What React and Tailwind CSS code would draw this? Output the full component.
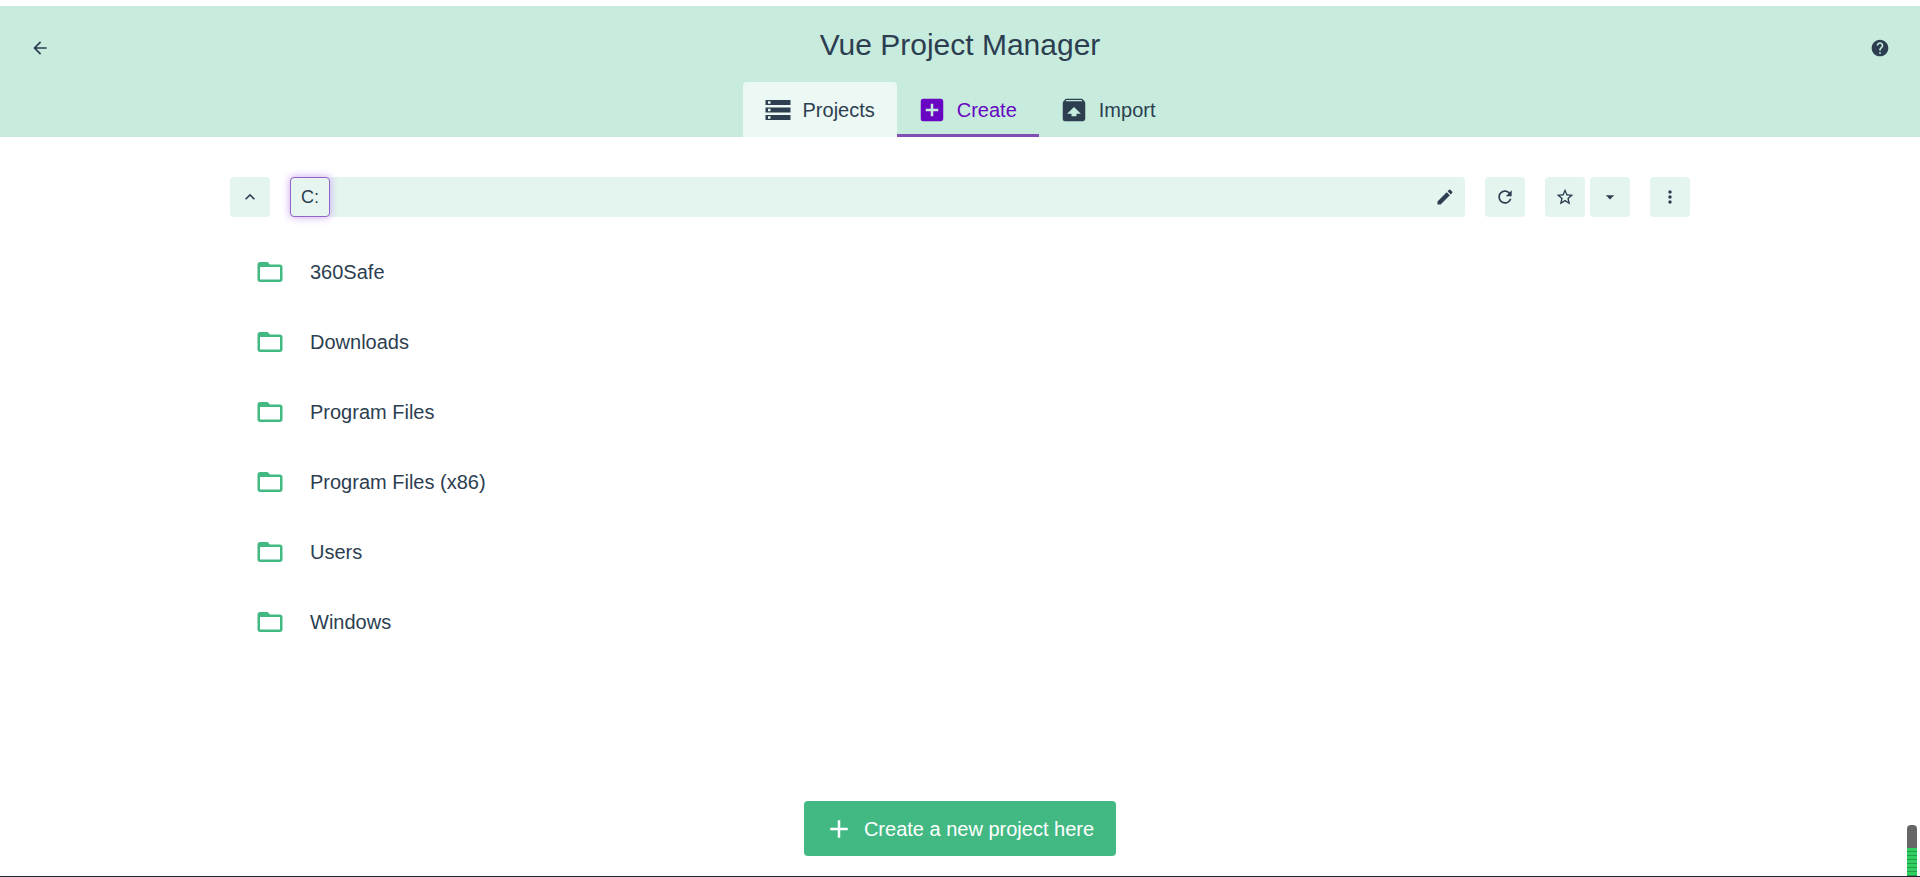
import {
  MdAdd,
  MdAddBox,
  MdArrowBack,
  MdArrowDropDown,
  MdEdit,
  MdHelp,
  MdKeyboardArrowUp,
  MdMoreVert,
  MdRefresh,
  MdStarBorder,
  MdStorage,
  MdUnarchive,
} from "react-icons/md";

const tabs = [
  { label: "Projects", Icon: MdStorage, style: "rounded-t-sm bg-[#ebf8f3]" },
  { label: "Create", Icon: MdAddBox, style: "border-b-3 border-[#7f4fb3] pt-[3px] text-[#6806c1]" },
  { label: "Import", Icon: MdUnarchive, style: "" },
];

const folders = ["360Safe", "Downloads", "Program Files", "Program Files (x86)", "Users", "Windows"];

function FolderIcon() {
  return (
    <svg viewBox="0 0 24 24" width="30" height="30" fill="currentColor" aria-hidden="true" className="text-[#42b983]">
      <path d="M20 6h-8l-2-2H4c-1.1 0-1.99.9-1.99 2L2 18c0 1.1.9 2 2 2h16c1.1 0 2-.9 2-2V8c0-1.1-.9-2-2-2zm0 12H4V8h16v10z" />
    </svg>
  );
}

function IconButton({ label, Icon }) {
  return (
    <button
      type="button"
      aria-label={label}
      className="flex size-10 shrink-0 items-center justify-center rounded-sm bg-[#e3f5ee]"
    >
      <Icon size={20} />
    </button>
  );
}

function Header() {
  return (
    <header className="mt-1.5 grid grid-cols-[1fr_auto_1fr] items-start bg-[#c7ecde]">
      <button type="button" aria-label="Back" className="ml-5 mt-5.5 flex size-10 items-center justify-center">
        <MdArrowBack size={20} />
      </button>
      <div className="flex flex-col items-center pt-5">
        <h1 className="text-[30px] leading-[38px]">Vue Project Manager</h1>
        <nav aria-label="Sections" className="mt-[18px] flex">
          {tabs.map(({ label, Icon, style }) => (
            <a key={label} href={"#" + label.toLowerCase()} className={`flex h-[55px] items-center gap-2.5 pl-5 pr-[22px] text-xl ${style}`}>
              <Icon size={30} />
              <span>{label}</span>
            </a>
          ))}
        </nav>
      </div>
      <button type="button" aria-label="Help" className="mr-5 mt-5.5 flex size-10 items-center justify-center justify-self-end">
        <MdHelp size={20} />
      </button>
    </header>
  );
}

function Toolbar() {
  return (
    <div className="flex gap-5">
      <IconButton label="Parent folder" Icon={MdKeyboardArrowUp} />
      <div className="flex flex-1 items-center justify-between rounded-sm bg-[#e3f5ee]">
        <button
          type="button"
          className="flex size-10 items-center justify-center rounded-sm border border-[#9464cc] bg-[#e6f5f0] text-lg shadow-[0_0_8px_#c9a3f2]"
        >
          C:
        </button>
        <IconButton label="Edit path" Icon={MdEdit} />
      </div>
      <IconButton label="Refresh" Icon={MdRefresh} />
      <div className="flex gap-[5px]">
        <IconButton label="Add to favorites" Icon={MdStarBorder} />
        <IconButton label="Favorites" Icon={MdArrowDropDown} />
      </div>
      <IconButton label="More actions" Icon={MdMoreVert} />
    </div>
  );
}

function LevelMeter() {
  return (
    <div className="absolute bottom-0 right-[3px] flex h-[51px] w-2.5 flex-col justify-end overflow-hidden rounded-t-sm bg-[#666666]">
      <div className="h-7 bg-[repeating-linear-gradient(#2fd05f_0_3px,#259a48_3px_4px)]" />
    </div>
  );
}

export default function App() {
  return (
    <div className="relative flex min-h-screen flex-col border-b border-[#1c2436] bg-white font-['Liberation_Sans',Arial,sans-serif] text-[#2c3e50]">
      <Header />
      <main className="mx-auto flex w-full max-w-[1500px] flex-1 flex-col px-5 pt-10">
        <Toolbar />
        <ul className="mt-5">
          {folders.map((name) => (
            <li key={name}>
              <a href="#folder" className="flex h-[70px] items-center gap-[25px] px-[25px] text-xl">
                <FolderIcon />
                <span>{name}</span>
              </a>
            </li>
          ))}
        </ul>
        <div className="mt-auto flex justify-center pb-5">
          <button type="button" className="flex h-[55px] items-center gap-2.5 rounded-sm bg-[#42b983] pl-5 pr-[22px] text-xl text-white">
            <MdAdd size={30} />
            <span>Create a new project here</span>
          </button>
        </div>
      </main>
      <LevelMeter />
    </div>
  );
}
